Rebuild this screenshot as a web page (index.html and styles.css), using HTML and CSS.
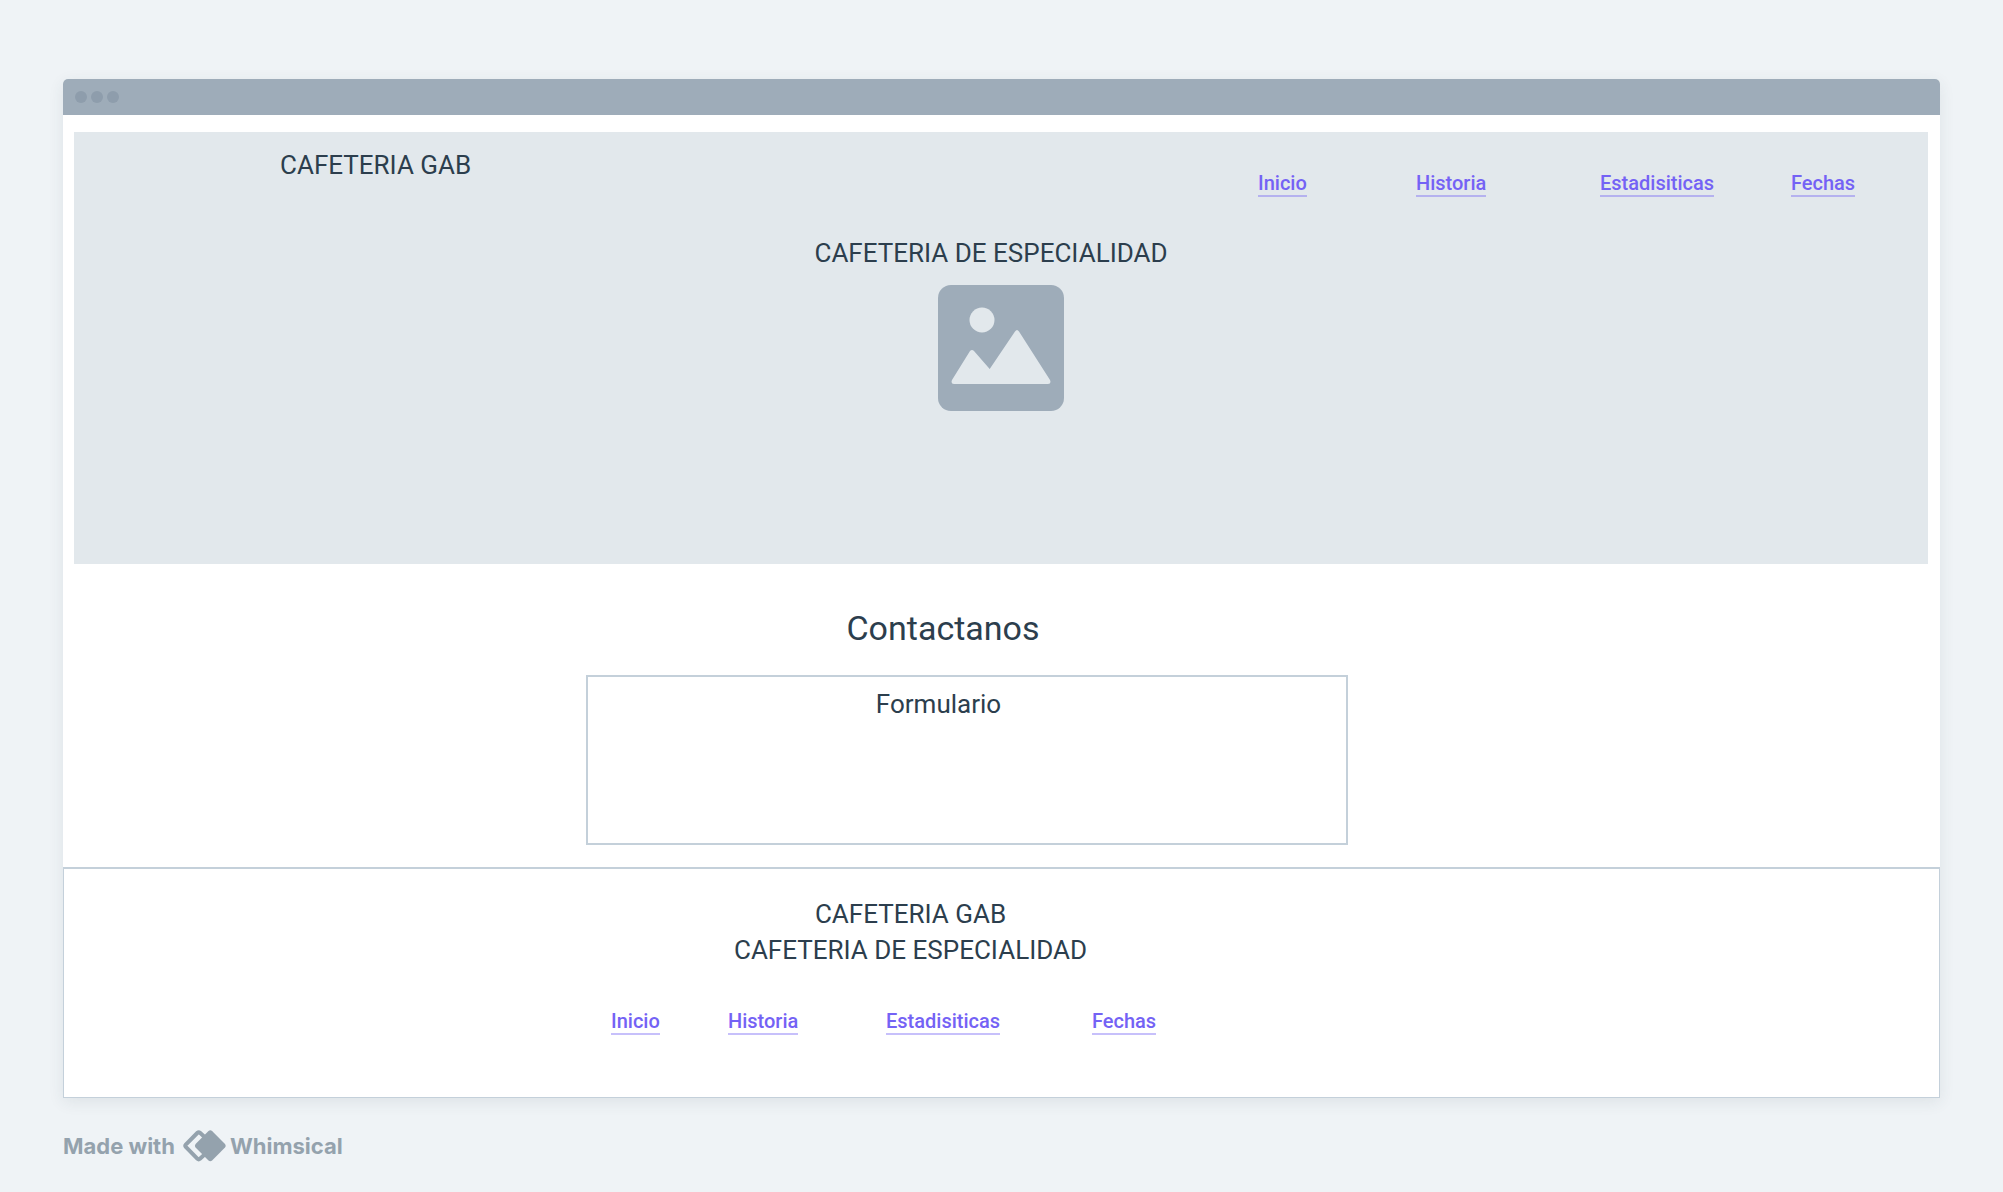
FILE: index.html
```html
<!DOCTYPE html>
<html lang="es">
<head>
  <meta charset="utf-8">
  <title>Cafeteria GAB</title>
  <link rel="stylesheet" href="styles.css">
</head>
<body>
  <div class="window">
    <div class="titlebar">
      <span class="dot"></span><span class="dot"></span><span class="dot"></span>
    </div>

    <header class="hero">
      <div class="hero-top">
        <p class="label">CAFETERIA GAB</p>
        <nav class="links hero-links">
          <a href="#">Inicio</a>
          <a href="#">Historia</a>
          <a href="#">Estadisiticas</a>
          <a href="#">Fechas</a>
        </nav>
      </div>
      <h1 class="label hero-title">CAFETERIA DE ESPECIALIDAD</h1>
      <svg class="picture" viewBox="0 0 126 126" aria-hidden="true">
        <rect class="picture-frame" width="126" height="126" rx="13"/>
        <circle class="picture-shape" cx="44" cy="35" r="12.5"/>
        <path class="picture-shape" d="M32 66 Q34 64 36 66 L51.700 84 L77 46.500 Q79 43.500 81 46.500 L112 95 Q113.500 99 110 99 L16 99 Q12.500 99 14 95 Z"/>
      </svg>
    </header>

    <main class="contact">
      <h2 class="contact-title">Contactanos</h2>
      <div class="contact-body">
        <form class="contact-form">
          <h3 class="label">Formulario</h3>
        </form>
      </div>
    </main>

    <footer class="footer">
      <div class="footer-names">
        <p class="label">CAFETERIA GAB</p>
        <p class="label">CAFETERIA DE ESPECIALIDAD</p>
      </div>
      <nav class="links footer-links">
        <a href="#">Inicio</a>
        <a href="#">Historia</a>
        <a href="#">Estadisiticas</a>
        <a href="#">Fechas</a>
      </nav>
    </footer>
  </div>

  <div class="credit">
    <span>Made with</span>
    <svg class="credit-logo" viewBox="0 0 43 32" aria-hidden="true">
      <path class="logo-outline" d="M27 12 L17 2.800 Q15.700 1.700 14.500 2.800 L2.800 14.700 Q1.800 15.800 2.800 16.900 L14.500 28.800 Q15.700 29.900 17 28.800 L27 19.500"/>
      <path class="logo-solid" d="M25.500 1 Q27.300 -.5 29.100 1 L42 14 Q43.300 15.800 42 17.600 L29.100 30.600 Q27.300 32 25.500 30.600 L12.600 17.600 Q11.300 15.800 12.600 14 Z"/>
    </svg>
    <span>Whimsical</span>
  </div>
</body>
</html>
```

FILE: styles.css
```css
* {
  box-sizing: border-box;
}

body {
  margin: 0;
  padding: 79px 63px 30px;
  background: #eff3f6;
  color: #2c3e4d;
  font-family: Roboto, "Liberation Sans", sans-serif;
}

h1, h2, h3, p {
  margin: 0;
  font-weight: 400;
}

.window {
  background: #fff;
  border-radius: 5px 5px 0 0;
  box-shadow: 0 4px 16px rgba(44, 62, 77, 0.09);
}

.titlebar {
  display: flex;
  align-items: center;
  gap: 4px;
  height: 36px;
  padding: 0 12px;
  background: #9eacb9;
  border-radius: 5px 5px 0 0;
}

.dot {
  width: 12px;
  height: 12px;
  border-radius: 50%;
  background: #8e9dac;
}

.label {
  font-size: 26px;
  line-height: 36px;
}

.hero {
  margin: 17px 12px 0 11px;
  padding: 15px 0 153px;
  background: #e2e8ec;
}

.hero-top {
  display: flex;
  justify-content: space-between;
  padding: 0 72px 0 206px;
}

.links {
  display: grid;
}

.links a {
  justify-self: start;
  border-bottom: 2px solid rgba(116, 98, 245, 0.4);
  color: #7462f5;
  font-size: 20px;
  font-weight: 500;
  line-height: 24px;
  text-decoration: none;
}

.hero-links {
  grid-template-columns: 158px 184px 191px 65px;
  margin-top: 24px;
}

.hero-title {
  margin-top: 38px;
  padding-right: 20px;
  text-align: center;
}

.picture {
  display: block;
  width: 126px;
  height: 126px;
  margin: 14px auto 0;
}

.picture-frame {
  fill: #9eacb9;
}

.picture-shape {
  fill: #e2e8ec;
}

.contact {
  padding: 42px 0 22px;
}

.contact-title {
  padding-right: 117px;
  font-size: 34px;
  line-height: 44px;
  text-align: center;
}

.contact-body {
  padding-right: 69px;
}

.contact-form {
  max-width: 762px;
  min-height: 170px;
  margin: 25px auto 0;
  padding: 9px 57px 9px 0;
  border: 2px solid #c4d0da;
  text-align: center;
}

.footer {
  padding: 27px 0 62px;
  border: 1px solid #c4d0da;
  border-top-width: 2px;
}

.footer-names {
  padding-right: 182px;
  text-align: center;
}

.footer-links {
  grid-template-columns: 117px 158px 206px 65px;
  justify-content: center;
  margin-top: 41px;
  padding-right: 235px;
}

.credit {
  display: flex;
  align-items: center;
  margin-top: 32px;
  color: #94a2ad;
  font-family: Inter, "Liberation Sans", sans-serif;
  font-size: 22px;
  font-weight: 700;
  line-height: 32px;
}

.credit-logo {
  width: 43px;
  height: 32px;
  margin: 0 4px 0 8px;
}

.logo-outline {
  fill: none;
  stroke: #94a2ad;
  stroke-width: 4;
}

.logo-solid {
  fill: #94a2ad;
}
```
